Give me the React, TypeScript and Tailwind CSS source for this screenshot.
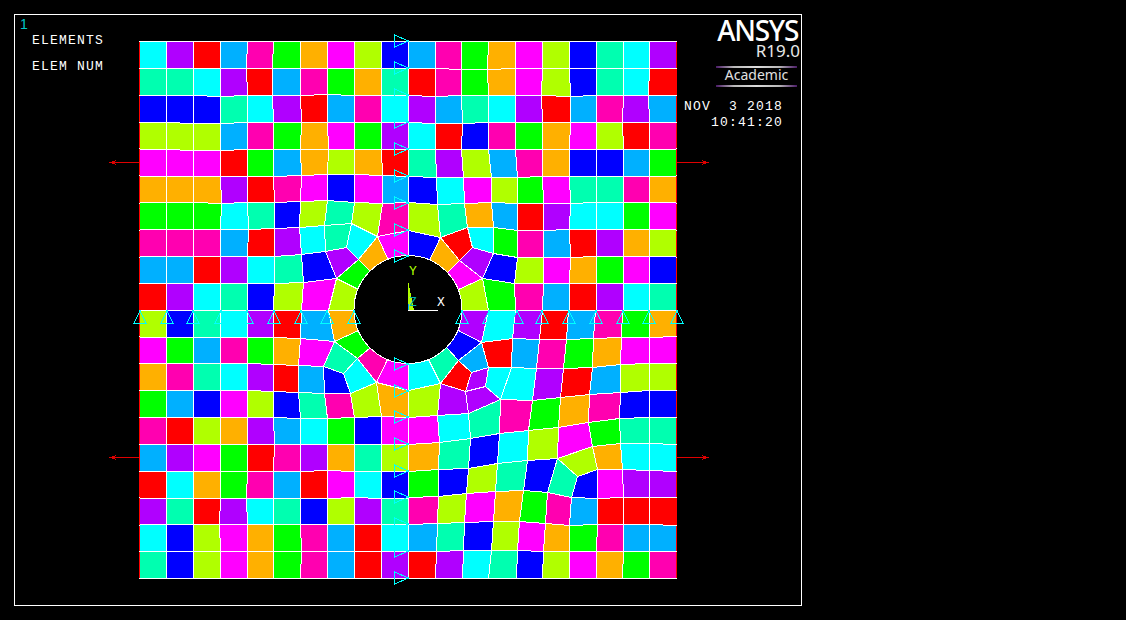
const PALETTE: Record<string, string> = {
  c: "#00ffff",
  p: "#b000ff",
  r: "#ff0000",
  a: "#00b0ff",
  h: "#ff00b0",
  g: "#00ff00",
  o: "#ffb000",
  f: "#ff00ff",
  l: "#b0ff00",
  b: "#0000ff",
  t: "#00ffb0",
};

// structured part of the mesh, one letter per element, dots are drawn from EXTRA
const ROWS = [
  "cprahgoflbahgoflbtcp",
  "ttcprahgotrhgoflbtcr",
  "bbbtcprahcpatcprahpa",
  "lllahgofgpcrbhgoflrh",
  "fffrgaolortplahobbag",
  "oooprhfbfabcflgfttho",
  "gggctbltlhltoarpccgf",
  "hhharpct.....gharpol",
  "aarpctb......blfogfb",
  "rpctblfl.....gharpct",
  "lbtcpra.............",
  "fgahgof.............",
  "ohtcprab............",
  "gabflbthlo..........",
  "hrlopacgbf..........",
  "apfgrhpotl..........",
  "rcogharfcb..........",
  "ptrpctblpt..........",
  "cblfogharc..........",
  "tblfogharp..........",
];

const NODES: Record<string, [number, number]> = {
  "6,5": [301, 175], "7,5": [327, 174], "8,5": [354, 174], "9,5": [382, 175],
  "11,5": [436, 177], "12,5": [463, 177], "13,5": [491, 177], "14,5": [517, 177],
  "3,6": [221, 203], "5,6": [274, 202], "6,6": [300, 201], "7,6": [327, 200], "8,6": [354, 202], "9,6": [382, 203],
  "10,6": [408, 202], "11,6": [437, 204], "12,6": [464, 203], "13,6": [491, 202], "14,6": [517, 203], "15,6": [543, 203], "16,6": [570, 203],
  "4,7": [248, 229], "5,7": [274, 228], "6,7": [299, 227], "7,7": [324, 225], "8,7": [351, 223], "9,7": [377, 236],
  "10,7": [408, 230], "11,7": [440, 237], "12,7": [467, 227], "13,7": [493, 227], "14,7": [517, 230], "15,7": [543, 230],
  "5,8": [274, 256], "6,8": [301, 254], "7,8": [325, 251], "8,8": [346, 247],
  "13,8": [493, 253], "14,8": [517, 257], "15,8": [543, 257], "16,8": [570, 257],
  "5,9": [274, 283], "6,9": [303, 282], "7,9": [336, 278], "8,9": [358, 289],
  "13,9": [482, 278], "14,9": [514, 283], "15,9": [543, 283],
  "6,10": [301, 310], "7,10": [328, 310], "8,10": [355, 310], "13,10": [488, 310], "14,10": [515, 310],
  "5,11": [273, 337], "6,11": [300, 338], "7,11": [334, 341],
  "5,12": [273, 364], "6,12": [298, 365], "7,12": [323, 366], "8,12": [343, 373],
  "5,13": [273, 391], "6,13": [298, 392], "7,13": [324, 393], "8,13": [350, 393], "9,13": [376, 382], "10,13": [408, 390],
  "6,14": [300, 418], "7,14": [327, 418], "8,14": [354, 417], "9,14": [381, 416], "10,14": [408, 417],
};

// small jogs on the otherwise regular grid
const JOGS: Record<string, [number, number]> = {
  "4,1": [-1, 0], "5,1": [-1, 0], "5,2": [-1, 0], "3,2": [0, 1], "7,2": [0, -1], "2,3": [0, 1], "3,3": [0, 1],
  "6,3": [1, 0], "2,4": [0, 1], "3,4": [0, 1], "7,4": [1, 0], "12,1": [0, 1], "13,1": [-1, 1], "11,2": [0, 1],
  "15,2": [-1, 0], "16,2": [1, 1], "11,3": [0, 1], "12,3": [1, 1], "16,3": [1, 0], "18,3": [-1, 0], "19,2": [-1, 0],
  "7,16": [0, -1], "5,15": [1, 0], "8,17": [0, -1], "4,17": [-1, 0], "3,18": [-1, 0], "6,19": [1, 0],
};

const EXTRA: [string, number[]][] = [
  // ring above the hole
  ["c", [351, 223, 377, 236, 358, 259, 346, 247]],
  ["o", [377, 236, 388, 260, 371, 272, 358, 259]],
  ["g", [358, 259, 371, 272, 358, 289, 336, 278]],
  ["p", [325, 251, 346, 247, 358, 259, 336, 278]],
  ["f", [377, 236, 408, 230, 408, 255, 388, 260]],
  ["b", [408, 230, 440, 237, 429, 260, 408, 255]],
  ["o", [440, 237, 459, 260, 447, 272, 429, 260]],
  ["r", [440, 237, 467, 227, 472, 247, 459, 260]],
  ["c", [467, 227, 493, 227, 493, 253, 472, 247]],
  ["p", [459, 260, 472, 247, 493, 253, 482, 278]],
  ["f", [447, 272, 459, 260, 482, 278, 458, 289]],
  ["l", [458, 289, 482, 278, 488, 310, 461, 310]],
  // ring below the hole, left side
  ["o", [328, 310, 355, 310, 358, 330, 334, 341]],
  ["g", [334, 341, 358, 330, 370, 347, 357, 358]],
  ["t", [334, 341, 357, 358, 343, 373, 323, 366]],
  ["h", [357, 358, 370, 347, 387, 359, 376, 382]],
  ["c", [357, 358, 376, 382, 350, 393, 343, 373]],
  ["f", [376, 382, 387, 359, 408, 363, 408, 390]],
  // ring below the hole, right side
  ["c", [408, 363, 428, 359, 440, 383, 408, 390]],
  ["l", [408, 390, 440, 383, 437, 415, 408, 417]],
  ["t", [428, 359, 446, 347, 458, 360, 440, 383]],
  ["b", [446, 347, 458, 330, 481, 342, 458, 360]],
  ["p", [461, 310, 488, 310, 481, 342, 458, 330]],
  ["a", [458, 360, 481, 342, 488, 367, 471, 372]],
  ["r", [440, 383, 458, 360, 471, 372, 465, 391]],
  ["p", [471, 372, 488, 367, 485, 386, 465, 391]],
  ["p", [440, 383, 465, 391, 468, 413, 437, 415]],
  ["p", [465, 391, 485, 386, 500, 399, 468, 413]],
  // row under the symmetry line
  ["c", [488, 310, 515, 310, 512, 338, 481, 342]],
  ["p", [515, 310, 542, 310, 539, 339, 512, 338]],
  ["r", [542, 310, 568, 310, 566, 339, 539, 339]],
  ["a", [568, 310, 595, 310, 593, 338, 566, 339]],
  ["h", [595, 310, 622, 310, 621, 337, 593, 338]],
  ["g", [622, 310, 649, 310, 649, 337, 621, 337]],
  ["o", [649, 310, 676, 310, 676, 336, 649, 337]],
  // lower right, drifting toward the second irregular node
  ["r", [481, 342, 512, 338, 511, 367, 488, 367]],
  ["a", [512, 338, 539, 339, 536, 368, 511, 367]],
  ["h", [539, 339, 566, 339, 563, 368, 536, 368]],
  ["g", [566, 339, 593, 338, 592, 367, 563, 368]],
  ["o", [593, 338, 621, 337, 620, 364, 592, 367]],
  ["f", [621, 337, 649, 337, 649, 363, 620, 364]],
  ["f", [649, 337, 676, 336, 676, 363, 649, 363]],
  ["c", [488, 367, 511, 367, 500, 399, 485, 386]],
  ["c", [511, 367, 536, 368, 532, 400, 500, 399]],
  ["p", [536, 368, 563, 368, 560, 397, 532, 400]],
  ["r", [563, 368, 592, 367, 589, 394, 560, 397]],
  ["a", [592, 367, 620, 364, 620, 392, 589, 394]],
  ["l", [620, 364, 649, 363, 649, 390, 620, 392]],
  ["l", [649, 363, 676, 363, 676, 390, 649, 390]],
  ["h", [500, 399, 532, 400, 528, 430, 499, 433]],
  ["g", [532, 400, 560, 397, 558, 427, 528, 430]],
  ["o", [560, 397, 589, 394, 588, 422, 558, 427]],
  ["h", [589, 394, 620, 392, 619, 418, 588, 422]],
  ["b", [620, 392, 649, 390, 649, 417, 619, 418]],
  ["b", [649, 390, 676, 390, 676, 417, 649, 417]],
  ["t", [468, 413, 500, 399, 499, 433, 470, 438]],
  ["c", [437, 415, 468, 413, 470, 438, 439, 442]],
  ["f", [408, 417, 437, 415, 439, 442, 408, 444]],
  ["o", [408, 444, 439, 442, 438, 469, 408, 471]],
  ["t", [439, 442, 470, 438, 468, 468, 438, 469]],
  ["b", [470, 438, 499, 433, 497, 463, 468, 468]],
  ["c", [499, 433, 528, 430, 527, 460, 497, 463]],
  ["l", [528, 430, 558, 427, 557, 458, 527, 460]],
  ["f", [558, 427, 588, 422, 592, 446, 557, 458]],
  ["g", [588, 422, 619, 418, 620, 443, 592, 446]],
  ["t", [619, 418, 649, 417, 649, 443, 620, 443]],
  ["t", [649, 417, 676, 417, 676, 444, 649, 443]],
  ["l", [557, 458, 592, 446, 597, 469, 577, 476]],
  ["o", [592, 446, 620, 443, 622, 469, 597, 469]],
  ["c", [620, 443, 649, 443, 649, 470, 622, 469]],
  ["c", [649, 443, 676, 444, 676, 471, 649, 470]],
  // bottom four rows
  ["g", [408, 471, 438, 469, 438, 496, 408, 497]],
  ["b", [438, 469, 468, 468, 466, 493, 438, 496]],
  ["l", [468, 468, 497, 463, 495, 491, 466, 493]],
  ["t", [497, 463, 527, 460, 523, 490, 495, 491]],
  ["b", [527, 460, 557, 458, 547, 492, 523, 490]],
  ["t", [557, 458, 577, 476, 571, 497, 547, 492]],
  ["b", [577, 476, 597, 469, 597, 498, 571, 497]],
  ["f", [597, 469, 622, 469, 623, 497, 597, 498]],
  ["p", [622, 469, 649, 470, 649, 497, 623, 497]],
  ["p", [649, 470, 676, 471, 676, 497, 649, 497]],
  ["h", [408, 497, 438, 496, 437, 523, 408, 524]],
  ["l", [438, 496, 466, 493, 464, 522, 437, 523]],
  ["f", [466, 493, 495, 491, 493, 521, 464, 522]],
  ["o", [495, 491, 523, 490, 519, 521, 493, 521]],
  ["g", [523, 490, 547, 492, 545, 523, 519, 521]],
  ["h", [547, 492, 571, 497, 569, 525, 545, 523]],
  ["a", [571, 497, 597, 498, 597, 524, 569, 525]],
  ["r", [597, 498, 623, 497, 623, 524, 597, 524]],
  ["r", [623, 497, 649, 497, 649, 524, 623, 524]],
  ["r", [649, 497, 676, 497, 676, 525, 649, 524]],
  ["a", [408, 524, 437, 523, 436, 551, 408, 551]],
  ["t", [437, 523, 464, 522, 463, 550, 436, 551]],
  ["b", [464, 522, 493, 521, 491, 550, 463, 550]],
  ["l", [493, 521, 519, 521, 517, 550, 491, 550]],
  ["f", [519, 521, 545, 523, 543, 551, 517, 550]],
  ["o", [545, 523, 569, 525, 569, 551, 543, 551]],
  ["g", [569, 525, 597, 524, 596, 551, 569, 551]],
  ["h", [597, 524, 623, 524, 623, 551, 596, 551]],
  ["a", [623, 524, 649, 524, 649, 551, 623, 551]],
  ["a", [649, 524, 676, 525, 676, 551, 649, 551]],
  ["r", [408, 551, 436, 551, 435, 578, 408, 578]],
  ["p", [436, 551, 463, 550, 462, 578, 435, 578]],
  ["c", [463, 550, 491, 550, 488, 578, 462, 578]],
  ["t", [491, 550, 517, 550, 516, 578, 488, 578]],
  ["b", [517, 550, 543, 551, 542, 578, 516, 578]],
  ["l", [543, 551, 569, 551, 569, 578, 542, 578]],
  ["f", [569, 551, 596, 551, 596, 578, 569, 578]],
  ["o", [596, 551, 623, 551, 622, 578, 596, 578]],
  ["g", [623, 551, 649, 551, 649, 578, 622, 578]],
  ["h", [649, 551, 676, 551, 676, 578, 649, 578]],
];

const SIDE_NODES = [41, 68, 95, 122, 148, 175, 203, 230, 257, 283, 310, 336, 363, 390, 417, 444, 471, 497, 525, 551, 578];
const SYMMETRY_Y = [41, 68, 95, 122, 149, 176, 203, 230, 256, 364, 391, 417, 444, 471, 497, 524, 551, 578];
const SYMMETRY_X = [140, 167, 193, 221, 247, 274, 301, 327, 354, 462, 489, 517, 542, 569, 596, 623, 649, 677];

function node(i: number, j: number): [number, number] {
  const fixed = NODES[`${i},${j}`];
  if (fixed) return fixed;
  const jog = JOGS[`${i},${j}`] ?? [0, 0];
  const x = i === 20 ? 676 : Math.round(139.2 + 26.85 * i);
  const y = Math.round(41.3 + 26.84 * j);
  return [x + jog[0], y + jog[1]];
}

const toPoints = (n: number[]) => {
  const out: string[] = [];
  for (let k = 0; k < n.length; k += 2) out.push(`${n[k] + 0.5},${n[k + 1] + 0.5}`);
  return out.join(" ");
};

function Mesh() {
  const cells: [string, number[]][] = [];
  ROWS.forEach((row, j) => {
    row.split("").forEach((ch, i) => {
      if (ch === ".") return;
      cells.push([ch, [...node(i, j), ...node(i + 1, j), ...node(i + 1, j + 1), ...node(i, j + 1)]]);
    });
  });
  return (
    <svg className="absolute inset-0" width={1126} height={620} shapeRendering="crispEdges">
      {[...cells, ...EXTRA].map(([ch, pts], k) => (
        <polygon key={k} points={toPoints(pts)} fill={PALETTE[ch]} stroke="#fff" strokeWidth={1} />
      ))}

      {/* surface load along both sides */}
      {SIDE_NODES.slice(0, -1).map((y, k) => (
        <g key={k} stroke="#f00">
          <line x1={139.5} x2={139.5} y1={y + 1} y2={SIDE_NODES[k + 1]} />
          <line x1={676.5} x2={676.5} y1={y + 1} y2={SIDE_NODES[k + 1]} />
        </g>
      ))}

      <circle cx={408} cy={309.5} r={54} fill="#000" stroke="#fff" />

      {/* triad */}
      <polygon points="408,280 414,310 408,310" fill="#b0ff00" />
      <line x1={408.5} x2={408.5} y1={304} y2={311} stroke="#00b0ff" />
      <line x1={408} x2={438} y1={310.5} y2={310.5} stroke="#fff" />

      {/* symmetry markers */}
      <g fill="none" stroke="#00ffff">
        {SYMMETRY_Y.map((y) => (
          <polygon key={y} points={`394.5,${y - 6} 408.5,${y} 394.5,${y + 6}`} />
        ))}
        {SYMMETRY_X.map((x) => (
          <polygon key={x} points={`${x},310.5 ${x + 6},323.5 ${x - 6},323.5`} />
        ))}
      </g>

      {/* pressure arrows */}
      <g stroke="#e00000" fill="none">
        {[162, 457].map((y) => (
          <g key={y}>
            <path d={`M139 ${y + 0.5}H110.5M116 ${y - 1.5}L110.5 ${y + 0.5}L116 ${y + 2.5}`} />
            <path d={`M677 ${y + 0.5}H707.5M702 ${y - 1.5}L707.5 ${y + 0.5}L702 ${y + 2.5}`} />
          </g>
        ))}
      </g>
    </svg>
  );
}

const MONO = "whitespace-pre font-['Liberation_Mono',monospace] text-[13px] leading-none tracking-[1.2px] text-white";
const BAR = "h-[2px] w-full bg-[linear-gradient(90deg,#4a1a66_0%,#b8b8b8_22%,#dcdcdc_50%,#b8b8b8_78%,#4a1a66_100%)]";

export default function App() {
  return (
    <div className="relative h-[620px] w-[1126px] overflow-hidden bg-black">
      <Mesh />

      <div className="relative ml-[14px] mt-[14px] flex h-[592px] w-[788px] justify-between border border-white">
        <div className="flex flex-col items-start pl-[5px] pt-[2px]">
          <span className="font-['Liberation_Sans',sans-serif] text-[14px] leading-[14px] text-[#00c8c8]">1</span>
          <span className={`${MONO} ml-[12px] mt-[3px]`}>ELEMENTS</span>
          <span className={`${MONO} ml-[12px] mt-[13px]`}>ELEM NUM</span>
        </div>

        <div className="flex flex-col items-end pt-[2px] font-['Noto_Sans',sans-serif]">
          <span className="mr-[3px] text-[28px] font-medium leading-[26px] tracking-[-1.3px] text-white">ANSYS</span>
          <span className="mr-[1px] text-[17px] leading-[16px] text-[#e8e8e8]">R19.0</span>
          <div className="mr-[4px] mt-[7px] flex w-[81px] flex-col items-center">
            <div className={BAR} />
            <span className="mb-[3px] text-[14px] leading-[14px] text-[#e0e0e0]">Academic</span>
            <div className={BAR} />
          </div>
          <span className={`${MONO} mr-[18px] mt-[13px]`}>{"NOV  3 2018"}</span>
          <span className={`${MONO} mr-[18px] mt-[3px]`}>10:41:20</span>
        </div>

        {/* triad labels sit on the drawing at the model origin */}
        <span className="absolute left-[394px] top-[250px] font-['Liberation_Mono',monospace] text-[13px] leading-none text-[#b0ff00]">Y</span>
        <span className="absolute left-[394px] top-[281px] font-['Liberation_Mono',monospace] text-[13px] leading-none text-[#00b0b0]">Z</span>
        <span className="absolute left-[422px] top-[281px] font-['Liberation_Mono',monospace] text-[13px] leading-none text-white">X</span>
      </div>
    </div>
  );
}
